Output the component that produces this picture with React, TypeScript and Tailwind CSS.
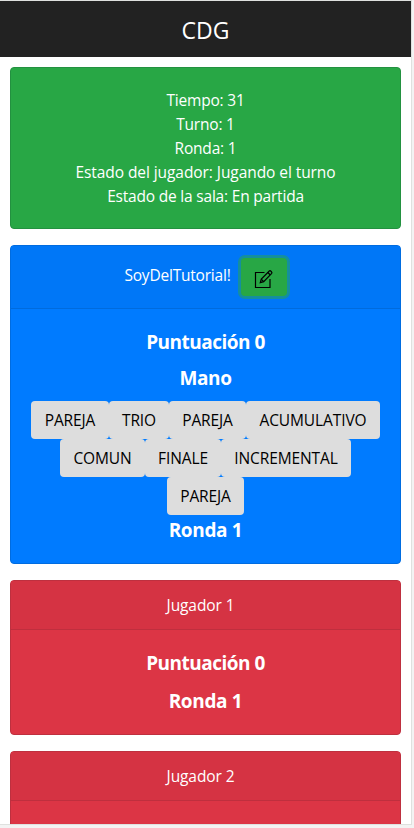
import type { ReactNode } from "react";

const status = [
  { text: "Tiempo: 31", tracking: "tracking-[-0.2px]" },
  { text: "Turno: 1", tracking: "tracking-[-0.2px]" },
  { text: "Ronda: 1", tracking: "tracking-[-0.2px]" },
  { text: "Estado del jugador: Jugando el turno", tracking: "tracking-[-0.07px]" },
  { text: "Estado de la sala: En partida", tracking: "tracking-[-0.2px]" },
];

const hand = [
  [
    { name: "PAREJA", width: "w-[78px]" },
    { name: "TRIO", width: "w-[60px]" },
    { name: "PAREJA", width: "w-[77px]" },
    { name: "ACUMULATIVO", width: "w-[134px]" },
  ],
  [
    { name: "COMUN", width: "w-[85px]" },
    { name: "FINALE", width: "w-[76px]" },
    { name: "INCREMENTAL", width: "w-[130px]" },
  ],
  [{ name: "PAREJA", width: "w-[77px]" }],
];

function Heading({ children, className = "" }: { children: ReactNode; className?: string }) {
  return (
    <h5 className={`text-[19px] leading-6 font-bold ${className}`}>{children}</h5>
  );
}

function PencilSquare() {
  return (
    <svg width="20" height="20" viewBox="0 0 20 20" fill="none" stroke="#000" strokeWidth="1.2" className="mt-1">
      <path d="M10.500 3.500H1.500v15h14.500v-8.500" />
      <path d="M6.300 13.700l1-3.600 8-8.100c1-.9 3.300 1.300 2.400 2.400l-8 8.300z" />
      <path d="M13.800 3.500l2.500 2.500M7.300 10.100l2.400 2.600" />
    </svg>
  );
}

function PlayerCard({ name, children }: { name: string; children?: ReactNode }) {
  return (
    <section className="h-[155px] rounded border border-[#be303f] bg-[#dc3545]">
      <header className="h-[49px] border-b border-[#bf2f3e] bg-[#d53343] pt-3 pr-[10px] leading-6 tracking-[-0.1px]">{name}</header>
      <div className="pt-[21px]">{children}</div>
    </section>
  );
}

export default function App() {
  return (
    <div className="h-[828px] w-[414px] overflow-hidden bg-[#f3f3f3] font-['Open_Sans','Noto_Sans',sans-serif]">
      <div className="h-[825px] w-[412px] overflow-hidden border-t border-r border-b border-[#dfe1df] bg-white text-center text-[15.5px] tracking-[-0.2px] text-white">
        <header className="flex h-14 items-center justify-center bg-[#222] pt-0.5 text-[23px] tracking-normal">CDG</header>
        <main className="flex flex-col gap-4 p-[10px]">
          <section className="h-[162px] rounded border border-[#239140] bg-[#28a745] pt-5">
            {status.map((line) => (
              <p key={line.text} className={`leading-6 ${line.tracking}`}>{line.text}</p>
            ))}
          </section>
          <section className="h-[319px] rounded border border-[#006ce0] bg-[#007bff]">
            <header className="flex h-[63px] justify-center border-b border-[#006bdd] bg-[#0077f7] pt-3">
              <span className="mt-[5px] mr-[10px] leading-6">SoyDelTutorial!</span>
              <button className="flex h-[38px] w-[46px] items-center justify-center rounded bg-[#28a745] ring-3 ring-[#28a745]/50" aria-label="Editar">
                <PencilSquare />
              </button>
            </header>
            <div className="pt-[21px]">
              <Heading className="tracking-[-0.5px]">Puntuación 0</Heading>
              <Heading className="mt-3 tracking-[-0.35px]">Mano</Heading>
              <div className="mt-[11px] text-black">
                {hand.map((row, index) => (
                  <div key={index} className="flex justify-center">
                    {row.map((card, position) => (
                      <button key={position} className={`h-[38px] rounded bg-[#ddd] leading-6 tracking-[-0.1px] ${card.width}`}>{card.name}</button>
                    ))}
                  </div>
                ))}
              </div>
              <Heading className="mt-[3px] tracking-[-0.35px]">Ronda 1</Heading>
            </div>
          </section>
          <PlayerCard name="Jugador 1">
            <Heading className="tracking-[-0.5px]">Puntuación 0</Heading>
            <Heading className="mt-[14px] tracking-[-0.35px]">Ronda 1</Heading>
          </PlayerCard>
          <PlayerCard name="Jugador 2" />
        </main>
      </div>
    </div>
  );
}
